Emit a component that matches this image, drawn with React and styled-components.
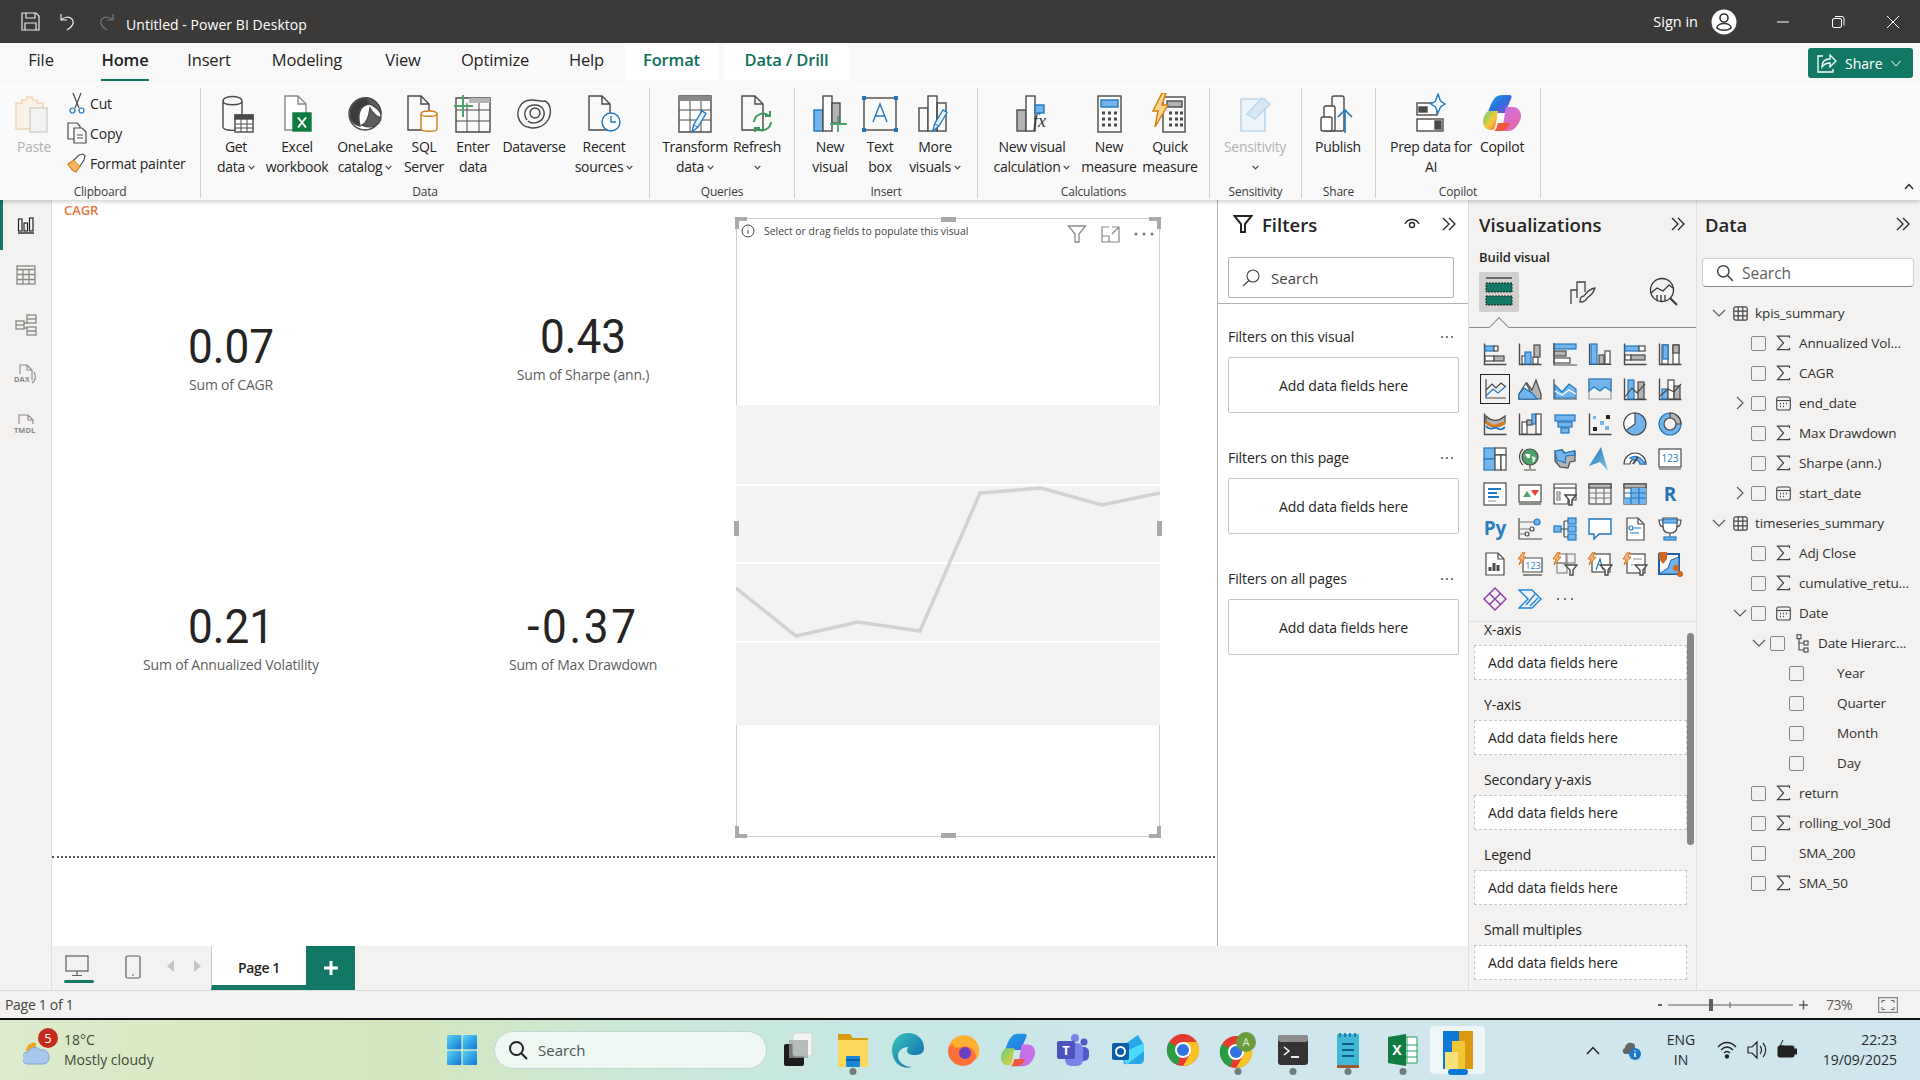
import React from 'react';
import styled, { createGlobalStyle } from 'styled-components';

const GlobalStyle = createGlobalStyle`
  html, body { margin: 0; padding: 0; background: #f3f2f1; }
  body { font-family: "Open Sans", "Noto Sans", sans-serif; color: #252423; font-size: 14px; }
  * { box-sizing: border-box; }
`;

const GREEN = '#117865';
const INK = '#4b4a48';
const BLUE = '#1f78c1';
const SKY = '#74b4ec';
const GREY = '#b4b4b4';

const Page = styled.div`
  width: 1920px;
  height: 1080px;
  overflow: hidden;
  display: flex;
  flex-direction: column;
  position: relative;
`;

/* title bar */
const TitleBar = styled.div`
  height: 43px;
  background: #3b3a38;
  color: #fff;
  display: flex;
  align-items: center;
  padding: 0 0 0 21px;
  flex: none;
`;
const TitleBtn = styled.span`
  width: 38px;
  display: flex;
  align-items: center;
`;
const TitleText = styled.span`
  font-size: 14px;
  margin: 5px 0 0 -9px;
  letter-spacing: 0.05px;
`;
const SignIn = styled.span`
  margin-left: auto;
  font-size: 14.5px;
  margin-right: 13px;
`;
const AvatarWrap = styled.span`
  display: flex;
  margin-right: 18px;
`;
const WinBtn = styled.span`
  width: 55px;
  display: flex;
  justify-content: center;
  align-items: center;
`;

/* tabs */
const TabRow = styled.div`
  height: 38px;
  background: #f9f9f9;
  display: flex;
  flex: none;
  position: relative;
`;
const Tab = styled.div`
  width: ${(p) => p.$w}px;
  margin-right: ${(p) => p.$gap || 0}px;
  display: flex;
  justify-content: center;
  background: ${(p) => (p.$context ? '#fff' : 'transparent')};
  color: ${(p) => (p.$context ? '#0f6f5e' : '#252423')};
  font-size: 16.5px;
  font-weight: ${(p) => (p.$context || p.$active ? 600 : 400)};
  letter-spacing: -0.15px;
`;
const TabLabel = styled.span`
  height: 38px;
  line-height: 34px;
  border-bottom: 2px solid ${(p) => (p.$active ? GREEN : 'transparent')};
`;
const ShareButton = styled.div`
  position: absolute;
  left: 1808px;
  top: 5px;
  width: 105px;
  height: 30px;
  background: ${GREEN};
  border-radius: 3px;
  color: #fff;
  display: flex;
  align-items: center;
  gap: 8px;
  padding-left: 9px;
  font-size: 14px;
`;

/* ribbon */
const Ribbon = styled.div`
  height: 119px;
  background: #f9f9f9;
  display: flex;
  padding-top: 7px;
  flex: none;
  position: relative;
  z-index: 3;
  box-shadow: 0 2px 4px rgba(0, 0, 0, 0.18);
`;
const Group = styled.div`
  width: ${(p) => p.$w}px;
  height: 110px;
  border-right: 1px solid #d2d0ce;
  display: flex;
  flex-direction: column;
  flex: none;
`;
const GroupBody = styled.div`
  display: flex;
  height: 97px;
  padding-left: ${(p) => p.$pad || 0}px;
`;
const GroupLabel = styled.div`
  height: 13px;
  line-height: 13px;
  font-size: 12px;
  letter-spacing: -0.2px;
  text-align: center;
  color: #3b3a39;
`;
const RibItem = styled.div`
  width: ${(p) => p.$w}px;
  display: flex;
  flex-direction: column;
  align-items: center;
  padding-top: 5px;
  flex: none;
  color: ${(p) => (p.$off ? '#b5b3b1' : '#252423')};
`;
const RibIcon = styled.div`
  height: 40px;
  margin-bottom: 4px;
  display: flex;
  align-items: center;
  justify-content: center;
`;
const RibLine = styled.div`
  height: 20px;
  line-height: 20px;
  font-size: 14px;
  letter-spacing: -0.3px;
  white-space: nowrap;
  display: flex;
  align-items: center;
  gap: 3px;
`;
const SmallCol = styled.div`
  display: flex;
  flex-direction: column;
  width: 133px;
`;
const SmallRow = styled.div`
  height: 30px;
  display: flex;
  align-items: center;
  font-size: 14px;
  letter-spacing: -0.15px;
  white-space: nowrap;
`;
const SmallIcon = styled.span`
  width: 22px;
  display: flex;
  justify-content: center;
  margin-left: -2px;
  margin-right: 2px;
`;
const Collapse = styled.div`
  margin-left: auto;
  align-self: flex-end;
  padding: 0 6px 6px 0;
`;

/* body */
const Body = styled.div`
  height: 790px;
  display: flex;
  flex: none;
`;
const Rail = styled.div`
  width: 52px;
  border-right: 1px solid #e1dfdd;
  display: flex;
  flex-direction: column;
  flex: none;
`;
const RailItem = styled.div`
  height: 50px;
  display: flex;
  align-items: center;
  justify-content: center;
  border-left: 3px solid ${(p) => (p.$active ? GREEN : 'transparent')};
  padding-right: 3px;
`;
const Center = styled.div`
  width: 1416px;
  display: flex;
  flex-direction: column;
  flex: none;
`;
const CenterTop = styled.div`
  height: 746px;
  display: flex;
`;
const Canvas = styled.div`
  width: 1165px;
  background: #fff;
  position: relative;
  flex: none;
`;
const CanvasTitle = styled.div`
  position: absolute;
  left: 12px;
  top: 1px;
  font-size: 13px;
  font-weight: 600;
  color: #ea7243;
  letter-spacing: -0.1px;
`;
const Card = styled.div`
  position: absolute;
  left: ${(p) => p.$cx - 150}px;
  top: ${(p) => p.$cy}px;
  width: 300px;
  text-align: center;
`;
const CardValue = styled.div`
  font-family: Roboto, "Noto Sans", sans-serif;
  font-size: 49px;
  font-weight: 400;
  line-height: 56px;
  color: #252423;
  transform: scaleX(0.9);
  letter-spacing: ${(p) => p.$track || 0}px;
`;
const CardLabel = styled.div`
  font-size: 14px;
  line-height: 20px;
  color: #605e5c;
  letter-spacing: -0.2px;
`;
const FoldLine = styled.div`
  position: absolute;
  left: 0;
  right: 2px;
  top: 656px;
  border-top: 2px dotted #555;
`;
const Visual = styled.div`
  position: absolute;
  left: 684px;
  top: 18px;
  width: 424px;
  height: 619px;
  border: 1px solid #cfcfcf;
`;
const VisualHint = styled.div`
  position: absolute;
  left: 4px;
  top: 5px;
  display: flex;
  align-items: center;
  gap: 9px;
  font-size: 10.4px;
  color: #444;
`;
const VisualTools = styled.div`
  position: absolute;
  right: 5px;
  top: 5px;
  display: flex;
  align-items: center;
  gap: 14px;
`;
const Chart = styled.svg`
  position: absolute;
  left: -1px;
  top: 186px;
`;
const Handle = styled.span`
  position: absolute;
  background: #a9a9a9;
  width: ${(p) => (p.$v ? 5 : 15)}px;
  height: ${(p) => (p.$v ? 15 : 5)}px;
  ${(p) => p.$pos}
`;
const Corner = styled.span`
  position: absolute;
  width: 12px;
  height: 12px;
  ${(p) => p.$pos}
  ${(p) => (p.$top ? 'border-top: 4px solid #a9a9a9;' : 'border-bottom: 4px solid #a9a9a9;')}
  ${(p) => (p.$lft ? 'border-left: 4px solid #a9a9a9;' : 'border-right: 4px solid #a9a9a9;')}
`;

/* filters */
const FiltersPane = styled.div`
  width: 251px;
  background: #fff;
  border-left: 1px solid #b3b0ad;
  flex: none;
`;
const PaneHead = styled.div`
  height: 50px;
  display: flex;
  align-items: center;
  padding: 0 ${(p) => p.$right || 10}px 2px ${(p) => p.$left || 10}px;
  font-size: 18.5px;
  font-weight: 600;
  gap: ${(p) => p.$gap || 0}px;
  flex: none;
`;
const PaneEnd = styled.span`
  margin-left: auto;
  display: flex;
  align-items: center;
  gap: 21px;
`;
const SearchWrap = styled.div`
  height: 54px;
  padding: 7px 14px 0 10px;
  border-bottom: 1px solid #b3b0ad;
  margin-bottom: 20px;
`;
const FilterSearch = styled.div`
  height: 41px;
  border: 1px solid #b3b0ad;
  border-radius: 2px;
  display: flex;
  align-items: center;
  gap: 11px;
  padding-left: 13px;
  font-size: 15px;
  color: #484644;
`;
const FilterSection = styled.div`
  padding: 0 9px 0 10px;
  height: 121px;
`;
const FilterHead = styled.div`
  height: 25px;
  display: flex;
  justify-content: space-between;
  align-items: center;
  font-size: 14px;
  letter-spacing: -0.1px;
  padding-right: 5px;
  margin-bottom: 8px;
`;
const FilterWell = styled.div`
  height: 56px;
  border: 1px solid #c8c6c4;
  border-radius: 2px;
  display: flex;
  align-items: center;
  justify-content: center;
  font-size: 14px;
  letter-spacing: -0.1px;
`;

/* page tabs */
const PageBar = styled.div`
  height: 44px;
  display: flex;
  align-items: stretch;
`;
const DeviceBtn = styled.div`
  width: ${(p) => p.$w}px;
  display: flex;
  justify-content: center;
  padding-top: 9px;
  position: relative;
  &::after {
    content: '';
    display: ${(p) => (p.$active ? 'block' : 'none')};
    position: absolute;
    left: 12px;
    width: 30px;
    height: 3px;
    bottom: 7px;
    background: ${GREEN};
    border-radius: 2px;
  }
`;
const Arrows = styled.div`
  width: 45px;
  margin: 0 3px 0 -4px;
  display: flex;
  align-items: center;
  justify-content: space-between;
  padding: 0 4px 4px 7px;
`;
const PageTab = styled.div`
  width: 95px;
  margin-left: 3px;
  background: #fff;
  border-left: 1px solid #c8c6c4;
  border-bottom: 5px solid ${GREEN};
  display: flex;
  align-items: center;
  justify-content: center;
  padding-top: 4px;
  font-size: 14px;
  font-weight: 600;
  letter-spacing: -0.4px;
`;
const AddTab = styled.div`
  width: 49px;
  background: ${GREEN};
  display: flex;
  align-items: center;
  justify-content: center;
`;

/* visualizations pane */
const VizPane = styled.div`
  width: 228px;
  border-left: 1px solid #e1dfdd;
  flex: none;
  position: relative;
  display: flex;
  flex-direction: column;
  overflow: hidden;
`;
const BuildLabel = styled.div`
  height: 15px;
  line-height: 15px;
  padding-left: 10px;
  font-size: 13px;
  font-weight: 600;
  letter-spacing: -0.1px;
  flex: none;
`;
const BuildTabs = styled.div`
  height: 40px;
  margin: 7px 0 0 10px;
  display: flex;
  align-items: center;
  flex: none;
`;
const BuildTab = styled.div`
  width: 40px;
  height: 40px;
  border-radius: 2px;
  margin-right: ${(p) => p.$gap}px;
  background: ${(p) => (p.$on ? '#d2d0ce' : 'transparent')};
  display: flex;
  align-items: center;
  justify-content: center;
`;
const BuildRule = styled.div`
  height: 1px;
  margin-top: 15px;
  background: #8f8d8b;
  position: relative;
  flex: none;
  &::after {
    content: '';
    position: absolute;
    left: 23px;
    top: -7px;
    width: 13px;
    height: 13px;
    background: #f3f2f1;
    border-left: 1px solid #8f8d8b;
    border-top: 1px solid #8f8d8b;
    transform: rotate(45deg);
  }
`;
const VizGrid = styled.div`
  display: grid;
  grid-template-columns: repeat(6, 35px);
  grid-auto-rows: 35px;
  padding: 8px 0 0 8px;
  height: 294px;
  border-bottom: 1px solid #e1dfdd;
  flex: none;
`;
const VizCell = styled.div`
  display: flex;
  align-items: center;
  justify-content: center;
`;
const WellSection = styled.div`
  height: 75px;
  padding: 0 9px 0 5px;
  flex: none;
`;
const WellLabel = styled.div`
  height: 15px;
  line-height: 15px;
  padding-left: 10px;
  font-size: 14px;
  letter-spacing: -0.1px;
`;
const Well = styled.div`
  height: 35px;
  margin-top: 8px;
  background: #fff;
  border: 1px dashed #c8c6c4;
  display: flex;
  align-items: center;
  padding-left: 13px;
  font-size: 14px;
  letter-spacing: -0.05px;
`;
const Scroll = styled.div`
  position: absolute;
  left: 218px;
  top: 433px;
  width: 7px;
  height: 212px;
  border-radius: 4px;
  background: #8a8886;
`;

/* data pane */
const DataPane = styled.div`
  width: 224px;
  border-left: 1px solid #e1dfdd;
  flex: none;
`;
const DataSearch = styled.div`
  height: 29px;
  margin: 8px 6px 11px 5px;
  background: #fff;
  border: 1px solid #d2d0ce;
  border-bottom-color: #8a8886;
  border-radius: 4px;
  display: flex;
  align-items: center;
  gap: 8px;
  padding-left: 13px;
  font-size: 15.5px;
  color: #605e5c;
`;
const Tree = styled.div`
  display: flex;
  flex-direction: column;
`;
const TreeRow = styled.div`
  height: 30px;
  display: flex;
  align-items: center;
  padding-left: ${(p) => p.$pad}px;
  font-size: 13.5px;
  letter-spacing: -0.1px;
  white-space: nowrap;
  color: #323130;
`;
const Slot = styled.span`
  width: ${(p) => p.$w}px;
  margin-right: ${(p) => p.$m || 0}px;
  display: flex;
  justify-content: center;
  align-items: center;
  flex: none;
`;
const Check = styled.span`
  width: 15px;
  height: 15px;
  border: 1px solid #8a8886;
  border-radius: 2px;
  margin-right: 10px;
  flex: none;
`;

/* status bar */
const StatusBar = styled.div`
  height: 30px;
  border-top: 1px solid #dedcda;
  border-bottom: 2px solid #111;
  display: flex;
  align-items: center;
  padding-left: 5px;
  font-size: 14px;
  letter-spacing: -0.3px;
  color: #484644;
  flex: none;
`;
const Zoomer = styled.div`
  margin-left: auto;
  display: flex;
  align-items: center;
  color: #605e5c;
  padding-right: 22px;
`;
const ZoomPct = styled.span`
  font-size: 14px;
  margin: 0 26px 0 18px;
  letter-spacing: -0.5px;
`;

/* taskbar */
const Taskbar = styled.div`
  height: 60px;
  background: linear-gradient(90deg, #dcebcc 0%, #d4e7bb 20%, #cbe8d8 33%, #c6e7e3 45%, #cfe6ec 62%, #cfe6ee 100%);
  display: flex;
  align-items: center;
  flex: none;
  color: #2a2a2a;
`;
const Weather = styled.div`
  width: 434px;
  display: flex;
  align-items: center;
  padding-left: 23px;
  gap: 7px;
  position: relative;
`;
const WeatherBadge = styled.span`
  position: absolute;
  left: 38px;
  top: -2px;
  width: 20px;
  height: 20px;
  border-radius: 50%;
  background: #c42b1c;
  color: #fff;
  font-size: 13px;
  text-align: center;
  line-height: 20px;
`;
const WeatherText = styled.div`
  font-size: 14px;
  line-height: 20px;
  color: #3d4a38;
`;
const TaskSlot = styled.div`
  width: 55px;
  height: 48px;
  display: flex;
  align-items: center;
  justify-content: center;
  position: relative;
  border-radius: 4px;
  background: ${(p) => (p.$active ? 'rgba(255,255,255,0.65)' : 'transparent')};
  &::after {
    content: '';
    display: ${(p) => (p.$run || p.$active ? 'block' : 'none')};
    position: absolute;
    bottom: -1px;
    left: 50%;
    transform: translateX(-50%);
    width: ${(p) => (p.$active ? 20 : 7)}px;
    height: ${(p) => (p.$active ? 6 : 7)}px;
    border-radius: 4px;
    background: ${(p) => (p.$active ? '#0a78d4' : '#6f7d7c')};
  }
`;
const SearchPill = styled.div`
  width: 273px;
  height: 38px;
  margin: 0 3px 0 5px;
  border-radius: 19px;
  background: #eef7f2;
  border: 1px solid #c0d8d2;
  display: flex;
  align-items: center;
  gap: 10px;
  padding-left: 13px;
  font-size: 15px;
  color: #4c5552;
`;
const Tray = styled.div`
  margin-left: auto;
  width: 340px;
  padding-right: 23px;
  display: flex;
  align-items: center;
`;
const TraySlot = styled.span`
  width: ${(p) => p.$w}px;
  margin-right: ${(p) => p.$m || 0}px;
  display: flex;
  justify-content: center;
  flex: none;
`;
const TrayText = styled.div`
  font-size: 14px;
  line-height: 20px;
  text-align: ${(p) => p.$align || 'center'};
  margin-left: ${(p) => (p.$push ? 'auto' : 0)};
  white-space: nowrap;
  width: ${(p) => (p.$w ? `${p.$w}px` : 'auto')};
`;

/* drawing helpers */
const Svg = ({ s = 24, vb, children }) => (
  <svg width={s} height={s} viewBox={vb || `0 0 ${s} ${s}`} fill="none" stroke={INK} strokeWidth="1.3">{children}</svg>
);
const V = ({ children }) => <svg width="24" height="24" viewBox="0 0 24 24" fill="none" stroke={INK} strokeWidth="1.2">{children}</svg>;
const Ax = () => <path d="M1.5 1.5v21h22" strokeWidth="1.4" />;
const Bl = (p) => <rect stroke={BLUE} fill={SKY} {...p} />;
const Gr = (p) => <rect stroke={INK} fill={GREY} {...p} />;
const Wt = (p) => <rect stroke={INK} fill="#fff" {...p} />;

const Chev2 = ({ c = '#252423' }) => <Svg s={16}><path d="M2 2l6 6-6 6M8 2l6 6-6 6" stroke={c} strokeWidth="1.3" /></Svg>;
const Caret = () => <svg width="7" height="5" viewBox="0 0 7 5" fill="none" stroke="#444" strokeWidth="1.2"><path d="M.7.8 3.5 3.8 6.3.8" /></svg>;
const Down = () => <svg width="14" height="14" viewBox="0 0 14 14" fill="none" stroke="#555" strokeWidth="1.1"><path d="M1 4l6 6 6-6" /></svg>;
const Right = () => <svg width="10" height="14" viewBox="0 0 10 14" fill="none" stroke="#555" strokeWidth="1.1"><path d="M2 1l6 6-6 6" /></svg>;
const Sigma = () => <svg width="15" height="16" viewBox="0 0 15 16" fill="none" stroke="#444" strokeWidth="1.2"><path d="M13.5 3V1.2H1.5L7.5 8l-6 6.6h12V13" /></svg>;
const Cal = () => <svg width="15" height="15" viewBox="0 0 15 15" fill="none" stroke="#444" strokeWidth="1.1"><rect x=".7" y="1" width="13.6" height="13" rx="2" /><path d="M1 4.5h13" /><path d="M4 7.5h1M7 7.5h1M10 7.5h1M4 10.5h1M7 10.5h1" strokeWidth="1.3" /></svg>;
const TableIc = () => <svg width="15" height="15" viewBox="0 0 15 15" fill="none" stroke="#444" strokeWidth="1.2"><rect x=".8" y=".8" width="13.4" height="13.4" rx="2" /><path d="M5.2 1v13M9.8 1v13M1 5.2h13M1 9.8h13" /></svg>;
const Hier = () => <svg width="13" height="19" viewBox="0 0 13 19" fill="none" stroke="#444" strokeWidth="1.1"><rect x="1" y=".7" width="4" height="4" /><rect x="8" y="7" width="4" height="4" /><rect x="8" y="14" width="4" height="4" /><path d="M3 5v11h5M3 9h5" /></svg>;
const Lens = ({ s = 16 }) => <Svg s={s} vb="0 0 16 16"><circle cx="6.5" cy="6.5" r="5" stroke="#444" /><path d="M10.3 10.3 15 15" stroke="#444" /></Svg>;
const Funnel = ({ s = 20, w = 1.3, c = '#252423' }) => <svg width={s} height={s} viewBox="0 0 20 20" fill="none" stroke={c} strokeWidth={w}><path d="M1.5 2h17l-6.5 8v8H8v-8z" /></svg>;
const Bolt = ({ x = 0, y = 0 }) => <path transform={`translate(${x} ${y})`} d="M5 0 0 7h3L1 13 8 5H5l2-5z" fill="#f4b183" stroke="#d67a12" strokeWidth="1" />;
const Pencil = ({ x = 0, y = 0 }) => <g transform={`translate(${x} ${y})`}><path d="M0 22l1.5-7L10 1l4 2.5L6 17z" fill="#e8f2fb" stroke={BLUE} strokeWidth="1.3" /><path d="M1.5 15 6 17" stroke={BLUE} strokeWidth="1" /></g>;

/* ribbon icons, drawn on a 40x40 grid */
const R = ({ children }) => <svg width="40" height="40" viewBox="0 0 40 40" fill="none" stroke={INK} strokeWidth="1.4">{children}</svg>;
const Doc = ({ x = 0, c = INK }) => <path transform={`translate(${x} 0)`} d="M4 3h13l8 8v26H4z M17 3v8h8" stroke={c} fill="#fff" />;
const ribIcons = {
  paste: <R><path d="M2 10h6v-3h4l1-3h5l1 3h4v3h6v26H2z" stroke="#f3ddc3" fill="#fbf3e8" strokeWidth="2" /><rect x="16" y="15" width="17" height="24" fill="#f4f3f2" stroke="#d2d0ce" /></R>,
  getdata: <R><path d="M7 8c0-6 19-6 19 0v26c0 3-9 4-14 3-3-.5-5-1.5-5-3zM7 8c0 5 19 5 19 0" /><rect x="19" y="22" width="18" height="17" fill="#fff" /><rect x="19" y="22" width="18" height="4" fill={INK} /><path d="M25 26v13M31 26v13M19 31h18M19 35h18" strokeWidth="1" /></R>,
  excel: <R><Doc x={4} c="#8a8886" /><rect x="16" y="20" width="18" height="18" fill="#107c41" stroke="#107c41" /><path d="M21 24.5l8 10M29 24.5l-8 10" stroke="#fff" strokeWidth="2" /></R>,
  onelake: <R><circle cx="20" cy="21" r="16" fill="#fff" /><path d="M5 22c0-10 7-17 16-17 2-1 5 3 4 6-7 1-14 5-10 22-4-1-10-4-10-11z" fill="#3d3c3a" /><path d="M21 5c9 0 15 8 15 16-2-5-7-8-11-10zM17 32c5-2 7-9 8-17 3 6 8 9 11 10-1 6-8 12-19 7z" fill="#605e5c" /></R>,
  sql: <R><path d="M4 3h13l8 8v26H4zM17 3v8h8" /><path d="M17 21c0-4 16-4 16 0v15c0 3-16 3-16 0z" fill="#fff" stroke="#d67a12" /><path d="M17 21c0 3 16 3 16 0" stroke="#d67a12" /></R>,
  enter: <R><path d="M3 5h34v34H3z" /><rect x="16" y="5" width="21" height="5" fill={GREY} stroke="none" /><path d="M3 17h34M3 28h34M14 10v29M26 10v29" strokeWidth="1" /><path d="M1 13h19M10 2v22" stroke="#4ca46b" strokeWidth="2" /></R>,
  dataverse: <R><path d="M8 31c-8-9-4-24 10-24 6 0 9 2 13 1 6 3 7 12 3 19-5 8-15 9-20 7-3 0-4-1-6-3z" /><path d="M13 27c-5-7-1-15 8-15 8 0 11 7 8 13-4 6-12 6-15 3" /><circle cx="21" cy="20" r="5" /></R>,
  recent: <R><path d="M5 3h13l8 8v26H5zM18 3v8h8" /><circle cx="27" cy="29" r="9" fill="#fff" stroke={BLUE} /><path d="M27 23v6h5" stroke={BLUE} /></R>,
  transform: <R><path d="M4 3h32v36H4z" fill="#fff" /><rect x="4" y="3" width="32" height="5" fill="#8a8886" stroke="none" /><path d="M4 17h32M4 27h32M15 8v31M26 8v31" strokeWidth="1" /><Pencil x={17} y={17} /></R>,
  refresh: <R><path d="M5 3h13l8 8v26H5zM18 3v8h8" /><g stroke="#3a9a5e" strokeWidth="2"><path d="M17 29a9 9 0 0 1 15-6" /><path d="M33 18v5h-5" /><path d="M34 29a9 9 0 0 1-15 6" /><path d="M18 39v-4h5" /></g></R>,
  newvis: <R><rect x="4" y="17" width="9" height="21" fill={SKY} stroke={BLUE} /><rect x="13" y="3" width="9" height="35" fill="#fff" /><rect x="22" y="10" width="8" height="20" fill={GREY} /><path d="M20 31h17M28 23v16" stroke="#4ca46b" strokeWidth="1.8" /></R>,
  textbox: <R><rect x="4" y="5" width="32" height="32" /><g fill={BLUE} stroke="none"><rect x="2" y="3" width="4" height="4" /><rect x="34" y="3" width="4" height="4" /><rect x="2" y="35" width="4" height="4" /><rect x="34" y="35" width="4" height="4" /></g><path d="M13 29l7-18 7 18M15 23h10" stroke={BLUE} /></R>,
  more: <R><rect x="4" y="15" width="9" height="23" /><rect x="13" y="3" width="9" height="35" fill="#fff" /><rect x="22" y="10" width="9" height="28" /><Pencil x={18} y={16} /></R>,
  calc: <R><rect x="5" y="17" width="9" height="21" fill={GREY} /><rect x="14" y="3" width="9" height="35" fill="#fff" /><rect x="23" y="12" width="9" height="8" fill={SKY} stroke={BLUE} /><text x="21" y="34" fontFamily="Liberation Serif, serif" fontStyle="italic" fontSize="18" fill="#333" stroke="none">fx</text></R>,
  measure: <R><rect x="9" y="3" width="23" height="36" /><rect x="12" y="7" width="17" height="7" fill={SKY} stroke={BLUE} /><path d="M13 20h3M19 20h3M25 20h3M13 26h3M19 26h3M25 26h3M13 32h3M19 32h3M25 32h3" strokeWidth="3" /></R>,
  quick: <R><rect x="13" y="4" width="22" height="35" /><rect x="17" y="8" width="15" height="6" fill={GREY} /><path d="M19 20h3M25 20h3M30 20h3M19 26h3M25 26h3M30 26h3M19 32h3M25 32h3M30 32h3" strokeWidth="3" /><path d="M12 0 3 18h5L5 34 18 12h-6l4-12z" fill="#fbd58a" stroke="#d67a12" /></R>,
  sensitivity: <R><path d="M6 6h24v32H6z" stroke="#bcd8ec" fill="#eef5fa" strokeWidth="1.6" /><path d="M12 21 27 5l8 6-15 15z" fill="#d7e8f4" stroke="#bcd8ec" /></R>,
  publish: <R><rect x="14" y="3" width="12" height="35" rx="2" /><rect x="6" y="13" width="11" height="25" rx="2" fill="#fff" /><rect x="3" y="24" width="11" height="14" rx="2" fill="#fff" /><path d="M27 40V17M20 24l7-7 7 7" stroke="#1f78c1" strokeWidth="1.6" /></R>,
  prep: <R><rect x="6" y="10" width="20" height="12" fill="#fff" /><rect x="8" y="14" width="8" height="5" fill={INK} /><rect x="6" y="26" width="26" height="12" fill="#fff" /><rect x="24" y="28" width="6" height="8" fill={INK} /><path d="M27 1l2.5 7 4.5 3-4.5 3-2.5 6-2.5-6-4.5-3 4.5-3z" stroke="#1f78c1" fill="#fff" /></R>,
  copilot: <svg width="40" height="40" viewBox="0 0 40 40"><defs><linearGradient id="cpa" x1="0" y1="0" x2="1" y2="1"><stop offset="0" stopColor="#1ea4e8" /><stop offset=".5" stopColor="#2c6fe0" /><stop offset="1" stopColor="#8c4fd8" /></linearGradient><linearGradient id="cpb" x1="0" y1="0" x2="1" y2="1"><stop offset="0" stopColor="#5ed27a" /><stop offset=".55" stopColor="#f2c93a" /><stop offset="1" stopColor="#f26a3c" /></linearGradient><linearGradient id="cpc" x1="0" y1="0" x2="1" y2="1"><stop offset="0" stopColor="#c86fe8" /><stop offset="1" stopColor="#e86aa6" /></linearGradient></defs><path d="M12 6c2-3 5-4 8-4h7c3 0 3 2 2 4l-6 14H6c1-5 3-10 6-14z" fill="url(#cpa)" /><path d="M6 18h10l-2 12c-1 5-1 7-5 7-5 0-8-4-8-9 0-4 3-8 5-10z" fill="url(#cpb)" /><path d="M24 14h7c5 0 8 4 8 9 0 4-3 9-6 12-2 2-4 3-7 3h-9c3-1 3-3 4-6z" fill="url(#cpc)" /><path d="M16 30h12c-2 5-5 8-10 8h-6c2-1 3-4 4-8z" fill="#f0563a" /></svg>,
};

/* small ribbon icons */
const CutIc = () => <svg width="18" height="22" viewBox="0 0 18 22" fill="none" stroke={INK} strokeWidth="1.2"><path d="M5 1l6 15M13 1 7 16" /><circle cx="4.5" cy="18.5" r="2.5" stroke={BLUE} /><circle cx="13.5" cy="18.5" r="2.5" stroke={BLUE} /></svg>;
const CopyIc = () => <svg width="21" height="22" viewBox="0 0 21 22" fill="none" stroke={INK} strokeWidth="1.2"><path d="M1 1h9l3 3v13H1z" /><path d="M7 6h8l4 4v11H7z" fill="#f9f9f9" /><path d="M10 13h6M10 16h6" /></svg>;
const PainterIc = () => <svg width="20" height="20" viewBox="0 0 20 20" fill="none" stroke={INK} strokeWidth="1.1"><path d="M1 11l6-4 6 6-4 6c-3-1-6-4-8-8z" fill="#f7b567" stroke="#d67a12" /><path d="M7 7l5-5 4-1 2 2-1 4-4 6" fill="#fff" /></svg>;

/* titlebar icons */
const SaveIc = () => <svg width="19" height="19" viewBox="0 0 19 19" fill="none" stroke="#e8e8e8" strokeWidth="1.2"><path d="M1 1h14l3 3v14H1z" /><path d="M5 1v5h9V1M4 18v-7h11v7" /></svg>;
const UndoIc = ({ c = '#e8e8e8' }) => <svg width="18" height="18" viewBox="0 0 18 18" fill="none" stroke={c} strokeWidth="1.2"><path d="M2 1v6h6M2 7c3-3 8-4 11-1 3 4 0 8-5 11" /></svg>;
const RedoIc = () => <svg width="18" height="18" viewBox="0 0 18 18" fill="none" stroke="#777" strokeWidth="1.2"><path d="M16 1v6h-6M16 7c-3-3-8-4-11-1-3 4 0 8 5 11" /></svg>;
const Avatar = () => <svg width="26" height="26" viewBox="0 0 26 26"><circle cx="13" cy="13" r="12.5" fill="#fff" /><circle cx="13" cy="9" r="4" fill="none" stroke="#333" strokeWidth="1.6" /><path d="M6 19c0-6 14-6 14 0-3 3-11 3-14 0z" fill="none" stroke="#333" strokeWidth="1.6" /></svg>;
const ShareIc = () => <svg width="20" height="20" viewBox="0 0 20 20" fill="none" stroke="#fff" strokeWidth="1.3"><path d="M6 3H1v16h15v-3" /><path d="M5 14c0-6 4-8 8-8V2l6 6-6 6v-4c-4 0-6 1-8 4z" /></svg>;

/* visual picker icons */
const vizIcons = [
  <V><Ax /><Bl x="2" y="4" width="9" height="5" /><Wt x="11" y="4" width="4" height="5" /><Wt x="2" y="14" width="9" height="5" /><Gr x="11" y="14" width="10" height="5" /></V>,
  <V><Ax /><Wt x="4" y="14" width="5" height="8" /><Wt x="15" y="15" width="5" height="7" /><Bl x="7" y="10" width="6" height="12" /><Gr x="16" y="3" width="6" height="12" /></V>,
  <V><Bl x="1" y="2" width="22" height="5" /><Gr x="1" y="9" width="12" height="5" /><Wt x="1" y="16" width="16" height="5" /><path d="M1 1v22h23" /></V>,
  <V><path d="M1.5 1.5v21h22" /><Bl x="3" y="2" width="6" height="20" /><Gr x="11" y="13" width="5" height="9" /><Wt x="17" y="9" width="5" height="13" /></V>,
  <V><Ax /><Bl x="2" y="4" width="14" height="5" /><Wt x="16" y="4" width="6" height="5" /><Wt x="2" y="13" width="6" height="5" /><Gr x="8" y="13" width="14" height="5" /></V>,
  <V><Ax /><Wt x="4" y="3" width="6" height="19" /><Bl x="5" y="3" width="5" height="14" /><Wt x="15" y="3" width="6" height="19" /><Gr x="15" y="3" width="6" height="8" /></V>,
  <svg width="30" height="30" viewBox="-3 -3 30 30" fill="none" stroke={INK} strokeWidth="1.2"><rect x="-2.5" y="-2.5" width="29" height="29" stroke="#252423" strokeWidth="1" /><path d="M3 2v19h20" /><path d="M3 13l6-6 4 4 5-5 5 4" stroke="#444" /><path d="M3 19l7-7 5 4 8-7" stroke={BLUE} /></svg>,
  <V><path d="M1 20 9 6l5 7 4-10 5 14v5H1z" fill={GREY} /><path d="M1 22v-5l7-11 8 16z" fill="#fff" /><path d="M1 22V17l5-6 8 5 5 6z" fill={SKY} stroke={BLUE} /></V>,
  <V><path d="M1 2v20h23" /><path d="M2 8l7 7 7-8 7 5v9H2z" fill={SKY} stroke={BLUE} /><path d="M2 14l7 4 7-5 7 4" stroke="#fff" /></V>,
  <V><path d="M1 2h22v20H1z" stroke="#999" /><path d="M1 2h22v12l-6-4-5 4-6-4-5 4z" fill={SKY} stroke={BLUE} /></V>,
  <V><Ax /><Bl x="5" y="3" width="6" height="19" /><Gr x="15" y="5" width="6" height="17" /><path d="M2 20l7-9 5 5 8-9" /></V>,
  <V><Ax /><Bl x="4" y="12" width="6" height="10" /><Wt x="10" y="3" width="6" height="19" /><Gr x="16" y="9" width="6" height="13" /><path d="M2 19l8-7 6 3 7-8" /></V>,
  <V><Ax /><path d="M3 4c6 6 12 6 19 0v7c-6 5-13 5-19 0z" fill={GREY} /><path d="M3 10c6 4 6 5 10 4 4-1 5-2 9-3" stroke="#d67a12" strokeWidth="3" /><path d="M3 14c5 6 8 0 11 2s5 2 8-1" stroke={BLUE} strokeWidth="2" /></V>,
  <V><Ax /><Wt x="4" y="10" width="5" height="12" /><Gr x="9" y="8" width="5" height="5" /><Bl x="14" y="2" width="4" height="10" /><Wt x="18" y="2" width="5" height="20" /></V>,
  <V><Bl x="2" y="3" width="20" height="6" /><Bl x="5" y="10" width="14" height="5" /><Bl x="8" y="16" width="8" height="5" /></V>,
  <V><Ax /><g stroke="none"><rect x="5" y="4" width="3" height="3" fill={SKY} /><rect x="12" y="9" width="4" height="4" fill={SKY} /><rect x="18" y="3" width="4" height="4" fill="#252423" /><rect x="5" y="15" width="4" height="4" fill="#252423" /><rect x="17" y="14" width="4" height="4" fill={SKY} /></g></V>,
  <V><circle cx="12" cy="12" r="11" fill={SKY} stroke={INK} /><path d="M12 12V1A11 11 0 0 0 3 18.5z" fill="#fff" stroke={INK} /></V>,
  <V><circle cx="12" cy="12" r="11" fill={SKY} stroke={BLUE} /><path d="M12 1a11 11 0 0 1 11 11H17a5 5 0 0 0-5-5z" fill={GREY} stroke={INK} /><circle cx="12" cy="12" r="6" fill="#f3f2f1" stroke={INK} /></V>,
  <V><Bl x="1" y="1" width="11" height="11" /><Bl x="1" y="12" width="11" height="11" /><Wt x="12" y="1" width="11" height="7" /><Wt x="12" y="8" width="6" height="15" /><Wt x="18" y="8" width="5" height="15" /></V>,
  <V><circle cx="12" cy="10" r="8" fill="#4ca46b" stroke={INK} /><path d="M7 7h5v4H9zM14 9l4 2-3 5z" fill="#fff" stroke="none" /><path d="M5 2a11 11 0 0 0 0 16M12 18v4M6 23h12" /></V>,
  <V><path d="M2 4l7-1 3 3 10-2v10l-5 1-2 6-8-1-5-6z" fill={GREY} /><path d="M2 4l7-1 2 3 10-2 1 4-9 1-1 7-4-2H4z" fill={SKY} stroke={BLUE} /></V>,
  <svg width="24" height="26" viewBox="0 0 24 26"><defs><linearGradient id="azm" x1="0" y1="0" x2="1" y2="1"><stop offset="0" stopColor="#1c6fb5" /><stop offset="1" stopColor="#7ec8ec" /></linearGradient></defs><path d="M13 1 1 20l11-4 8 9z" fill="url(#azm)" /></svg>,
  <V><path d="M1 17a11 11 0 0 1 22 0h-6a5 5 0 0 0-10 0z" fill="#fff" /><path d="M7 11a9 9 0 0 1 10 0l6 6h-6a5 5 0 0 0-6-4z" fill={SKY} stroke={BLUE} /><path d="M10 17l5-7" strokeWidth="2" /></V>,
  <svg width="24" height="24" viewBox="0 0 24 24" fill="none" stroke={INK}><rect x="1" y="2" width="22" height="18" fill="#fff" strokeWidth="1.2" /><path d="M1 22h22" /><text x="12" y="15" textAnchor="middle" fontSize="10" fontFamily="Open Sans, sans-serif" fill={BLUE} stroke="none">123</text></svg>,
  <V><rect x="1" y="1" width="22" height="22" fill="#fff" /><path d="M5 7h13M5 11h9M5 15h11" stroke={BLUE} strokeWidth="2" /><path d="M5 19h8" stroke={GREY} strokeWidth="1.5" /></V>,
  <V><rect x="1" y="3" width="22" height="17" fill="#fff" /><path d="M5 15l4-6 4 6z" fill="#4ca46b" stroke="none" /><path d="M13 8h8l-4 6z" fill="#e0413a" stroke="none" /><path d="M1 22h22" /></V>,
  <V><path d="M1 2h22v16h-8v4H1z" fill="#fff" /><path d="M1 6h22" /><path d="M4 10h3v3H4zM4 15h3v3H4z" stroke="#777" /><path d="M12 13h11l-4 5v5h-3v-5z" fill="#fff" strokeWidth="1.5" /></V>,
  <V><rect x="1" y="2" width="22" height="20" /><rect x="1" y="2" width="22" height="4" fill={GREY} /><path d="M8 6v16M16 6v16M1 11h22M1 16h22" stroke="#777" /></V>,
  <V><rect x="1" y="2" width="22" height="20" /><rect x="1" y="2" width="22" height="4" fill={GREY} /><rect x="8" y="6" width="15" height="16" fill={SKY} stroke="none" /><rect x="1" y="16" width="22" height="6" fill={SKY} stroke="none" /><path d="M8 6v16M16 6v16M1 11h22M1 16h22" stroke={BLUE} /></V>,
  <svg width="26" height="28" viewBox="0 0 26 28"><text x="13" y="21" textAnchor="middle" fontSize="19" fontWeight="700" fontFamily="Open Sans, sans-serif" fill="#2273b8">R</text></svg>,
  <svg width="30" height="30" viewBox="0 0 30 30"><text x="15" y="21" textAnchor="middle" fontSize="19" fontWeight="700" fontFamily="Open Sans, sans-serif" fill="#2a7fc1">Py</text></svg>,
  <V><path d="M1 1v21h23" /><path d="M1 5h15M1 12h11M1 17h7" stroke="#777" /><circle cx="19" cy="5" r="3" fill={SKY} stroke={BLUE} /><circle cx="14" cy="12" r="2" /><circle cx="9" cy="17" r="2" /></V>,
  <V><Bl x="1" y="9" width="7" height="6" /><Bl x="15" y="1" width="8" height="6" /><Bl x="15" y="9" width="8" height="6" /><Bl x="15" y="17" width="8" height="6" /><path d="M8 12h7M11 4v16M11 4h4M11 20h4" /></V>,
  <svg width="24" height="24" viewBox="0 0 24 24" fill="#fff" stroke="#2273b8" strokeWidth="1.4"><path d="M1 2h22v15H11l-5 5v-5H1z" /></svg>,
  <V><path d="M4 1h11l6 6v16H4z" fill="#fff" /><path d="M15 1v6h6" /><circle cx="8" cy="11" r="2" stroke={BLUE} /><path d="M11 11h7M7 16h9" stroke={BLUE} /></V>,
  <V><path d="M5 1h14v9c0 4-3 6-7 6s-7-2-7-6z" fill="#fff" /><path d="M5 2h14v4H5z" fill={SKY} stroke={BLUE} /><path d="M5 3H1c0 5 2 7 5 7M19 3h4c0 5-2 7-5 7M12 16v4" /><rect x="6" y="20" width="12" height="3" fill={SKY} stroke={BLUE} /></V>,
  <V><path d="M3 1h12l6 6v16H3z" fill="#fff" /><path d="M15 1v6h6" /><path d="M7 19v-4M11 19v-8M15 19v-6" strokeWidth="3" /></V>,
  <svg width="26" height="24" viewBox="0 0 26 24" fill="none" stroke={INK} strokeWidth="1.2"><path d="M6 6h19v14H6z" fill="#fff" /><path d="M6 23h19" /><text x="16" y="17" textAnchor="middle" fontSize="9" fontFamily="Open Sans, sans-serif" fill={BLUE} stroke="none">123</text><Bolt x={1} y={0} /></svg>,
  <svg width="26" height="24" viewBox="0 0 26 24" fill="none" stroke="#888" strokeWidth="1.2"><rect x="5" y="2" width="10" height="9" fill="#fff" /><rect x="14" y="2" width="9" height="9" /><rect x="5" y="11" width="10" height="10" /><path d="M13 13h12l-4 5v5h-3v-5z" fill="#fff" stroke={INK} strokeWidth="1.4" /><Bolt x={1} y={0} /></svg>,
  <svg width="26" height="24" viewBox="0 0 26 24" fill="none" stroke={INK} strokeWidth="1.2"><rect x="5" y="2" width="18" height="18" fill="#fff" /><path d="M9 18l4-11 3 11" stroke={BLUE} /><path d="M13 13h12l-4 5v5h-3v-5z" fill="#fff" strokeWidth="1.4" /><Bolt x={1} y={0} /></svg>,
  <svg width="26" height="24" viewBox="0 0 26 24" fill="none" stroke={INK} strokeWidth="1.2"><rect x="5" y="2" width="18" height="19" fill="#fff" /><path d="M11 7h9M9 13h2" stroke="#888" /><path d="M13 13h12l-4 5v5h-3v-5z" fill="#fff" strokeWidth="1.4" /><Bolt x={1} y={0} /></svg>,
  <svg width="26" height="26" viewBox="0 0 26 26" fill="none"><path d="M2 3h20v20H2z" fill="#fff" stroke="#1f5fa8" strokeWidth="2" /><path d="M2 23l9-6 3-8 8-3v17z" fill={SKY} stroke="#1f5fa8" /><path d="M2 1h8v7l-4 5-4-5z" fill="#d0671c" /><circle cx="19" cy="17" r="3" fill="#d0671c" /><circle cx="23" cy="23" r="3" fill="#d0671c" /></svg>,
  <svg width="24" height="24" viewBox="0 0 24 24" fill="none" stroke="#8a3ba5" strokeWidth="1.4"><path d="M12 1l5.5 5.5L12 12 6.5 6.5zM12 12l5.5 5.5L12 23l-5.5-5.5zM6.5 6.5 12 12l-5.5 5.5L1 12zM17.5 6.5 23 12l-5.5 5.5L12 12z" /></svg>,
  <svg width="24" height="20" viewBox="0 0 24 20" fill="none" stroke="#1d86e0" strokeWidth="1.4"><path d="M1 1h13l9 9-9 9H1l9-9z" /><path d="M8 16 17 5M12 17l8-8" /></svg>,
  <svg width="24" height="6" viewBox="0 0 24 6" fill={INK}><circle cx="5" cy="3" r="1" /><circle cx="12" cy="3" r="1" /><circle cx="19" cy="3" r="1" /></svg>,
];

/* taskbar icons */
const taskIcons = [
  <svg width="30" height="36" viewBox="0 0 30 36"><rect x="1" y="12" width="20" height="22" rx="2" fill="#1d1d1d" /><rect x="10" y="1" width="19" height="23" rx="2" fill="#f2f5f4" stroke="#cfd6d4" /><rect x="6" y="8" width="19" height="18" fill="#9ca3a2" opacity=".7" /></svg>,
  <svg width="32" height="36" viewBox="0 0 32 36"><path d="M1 2h12l3 4h15v4H1z" fill="#d89b14" /><path d="M1 8h30v27H1z" fill="#fbd75b" /><rect x="9" y="24" width="14" height="11" rx="1" fill="#1a86d8" /><path d="M9 28h14" stroke="#0a5ea8" strokeWidth="2" /></svg>,
  <svg width="34" height="36" viewBox="0 0 34 36"><defs><linearGradient id="edg" x1="0" y1="0" x2="1" y2="1"><stop offset="0" stopColor="#38c6b4" /><stop offset="1" stopColor="#0f62b4" /></linearGradient></defs><path d="M17 1c9 0 16 6 16 15 0 6-5 7-9 7-6 0-8-2-8-5 0-2 2-3 2-3-6 0-11 3-11 9 0 6 6 11 14 11C10 38 1 30 1 18 1 8 8 1 17 1z" fill="url(#edg)" /></svg>,
  <svg width="34" height="34" viewBox="0 0 34 34"><circle cx="17" cy="18" r="15" fill="#ff7139" /><circle cx="19" cy="20" r="6" fill="#6b3fc4" /><path d="M3 14C6 3 20-2 29 7c6 6 5 15 1 20 1-9-6-16-15-13-5 2-8 0-8-3-2 1-3 2-4 3z" fill="#fdb02f" /></svg>,
  <svg width="36" height="36" viewBox="0 0 40 40"><defs><linearGradient id="cqa" x1="0" y1="0" x2="1" y2="1"><stop offset="0" stopColor="#1ea4e8" /><stop offset="1" stopColor="#2c6fe0" /></linearGradient><linearGradient id="cqb" x1="0" y1="0" x2="1" y2="1"><stop offset="0" stopColor="#5ed27a" /><stop offset="1" stopColor="#f2c93a" /></linearGradient></defs><path d="M12 6c2-3 5-4 8-4h7c3 0 3 2 2 4l-6 14H6c1-5 3-10 6-14z" fill="url(#cqa)" /><path d="M6 18h10l-2 12c-1 5-1 7-5 7-5 0-8-4-8-9 0-4 3-8 5-10z" fill="url(#cqb)" /><path d="M24 14h7c5 0 8 4 8 9 0 4-3 9-6 12-2 2-4 3-7 3h-9c3-1 3-3 4-6z" fill="#c86fe8" /><path d="M16 30h12c-2 5-5 8-10 8h-6c2-1 3-4 4-8z" fill="#f0563a" /></svg>,
  <svg width="34" height="34" viewBox="0 0 34 34"><circle cx="19" cy="5" r="4" fill="#7b83eb" /><circle cx="28" cy="9" r="3.5" fill="#5059c9" /><rect x="20" y="14" width="13" height="14" rx="5" fill="#5059c9" /><rect x="9" y="10" width="18" height="23" rx="6" fill="#7b83eb" /><rect x="1" y="8" width="18" height="18" rx="2" fill="#4b53bc" /><text x="10" y="22" textAnchor="middle" fontSize="13" fontWeight="700" fontFamily="Open Sans, sans-serif" fill="#fff">T</text></svg>,
  <svg width="34" height="34" viewBox="0 0 34 34"><path d="M10 14 27 2l6 10v14c0 3-2 5-5 5H13z" fill="#28a8ea" /><path d="M11 20 33 10v8L15 32z" fill="#50d9ff" /><rect x="1" y="10" width="17" height="17" rx="2" fill="#0a5ea8" /><circle cx="9.5" cy="18.5" r="4.5" fill="none" stroke="#fff" strokeWidth="2" /></svg>,
  <svg width="34" height="34" viewBox="0 0 34 34"><circle cx="17" cy="17" r="16" fill="#e33b2e" /><path d="M17 17 3 9a16 16 0 0 0 8 23z" fill="#2a9c44" /><path d="M17 9h14a16 16 0 0 1-14 24l7-12z" fill="#f7c325" /><circle cx="17" cy="17" r="8" fill="#fff" /><circle cx="17" cy="17" r="6" fill="#2f74e0" /></svg>,
  <svg width="38" height="38" viewBox="0 0 38 38"><g transform="translate(0 4)"><circle cx="17" cy="17" r="16" fill="#e33b2e" /><path d="M17 17 3 9a16 16 0 0 0 8 23z" fill="#2a9c44" /><path d="M17 9h14a16 16 0 0 1-14 24l7-12z" fill="#f7c325" /><circle cx="17" cy="17" r="8" fill="#fff" /><circle cx="17" cy="17" r="6" fill="#2f74e0" /></g><circle cx="27" cy="11" r="10" fill="#6a9b3c" /><text x="27" y="15" textAnchor="middle" fontSize="11" fontFamily="Open Sans, sans-serif" fill="#dfeccd">A</text></svg>,
  <svg width="30" height="30" viewBox="0 0 30 30"><rect x="0" y="0" width="30" height="30" rx="3" fill="#333" /><rect x="0" y="0" width="30" height="7" rx="3" fill="#8d8d8d" /><path d="M6 12l5 4-5 4" stroke="#fff" strokeWidth="1.5" fill="none" /><path d="M13 22h8" stroke="#fff" strokeWidth="1.8" /></svg>,
  <svg width="24" height="38" viewBox="0 0 24 38"><rect x="1" y="3" width="22" height="31" rx="1" fill="#41b8d8" /><path d="M4 2v4M9 2v4M14 2v4M19 2v4" stroke="#0f6d92" strokeWidth="1.5" /><path d="M6 13h12M6 19h12M6 25h12" stroke="#0b5f84" strokeWidth="1.8" /><rect x="1" y="34" width="22" height="3" fill="#a05a2c" /></svg>,
  <svg width="30" height="32" viewBox="0 0 30 32"><path d="M11 3h18v26H11z" fill="#fff" stroke="#21a366" /><path d="M19 3v26M11 11h18M11 17h18M11 23h18" stroke="#21a366" /><path d="M0 3 18 0v32L0 29z" fill="#107c41" /><text x="9" y="21" textAnchor="middle" fontSize="14" fontWeight="700" fontFamily="Open Sans, sans-serif" fill="#fff">X</text></svg>,
  <svg width="30" height="38" viewBox="0 0 30 38"><rect x="0" y="0" width="30" height="38" fill="#0a78d4" /><rect x="16" y="0" width="14" height="38" fill="#d99a12" /><rect x="9" y="10" width="13" height="28" fill="#f2c536" /><rect x="2" y="21" width="13" height="17" fill="#f8e07a" /></svg>,
];

const Win = () => <svg width="30" height="30" viewBox="0 0 30 30"><defs><linearGradient id="st" x1="0" y1="0" x2="1" y2="1"><stop offset="0" stopColor="#5fd4f5" /><stop offset="1" stopColor="#0a78d4" /></linearGradient></defs><g fill="url(#st)"><rect x="0" y="0" width="14.3" height="14.3" rx="1" /><rect x="15.7" y="0" width="14.3" height="14.3" rx="1" /><rect x="0" y="15.7" width="14.3" height="14.3" rx="1" /><rect x="15.7" y="15.7" width="14.3" height="14.3" rx="1" /></g></svg>;

const points = [[0, 183], [60, 231], [122, 217], [184, 226], [244, 88], [305, 83], [366, 100], [424, 88]];

const ribbon = {
  data: [
    { w: 56, i: 'getdata', a: 'Get', b: 'data', c: 1 },
    { w: 66, i: 'excel', a: 'Excel', b: 'workbook' },
    { w: 70, i: 'onelake', a: 'OneLake', b: 'catalog', c: 1 },
    { w: 48, i: 'sql', a: 'SQL', b: 'Server' },
    { w: 50, i: 'enter', a: 'Enter', b: 'data' },
    { w: 72, i: 'dataverse', a: 'Dataverse' },
    { w: 68, i: 'recent', a: 'Recent', b: 'sources', c: 1 },
  ],
  queries: [
    { w: 70, i: 'transform', a: 'Transform', b: 'data', c: 1 },
    { w: 54, i: 'refresh', a: 'Refresh', c: 1 },
  ],
  insert: [
    { w: 46, i: 'newvis', a: 'New', b: 'visual' },
    { w: 54, i: 'textbox', a: 'Text', b: 'box' },
    { w: 56, i: 'more', a: 'More', b: 'visuals', c: 1 },
  ],
  calc: [
    { w: 96, i: 'calc', a: 'New visual', b: 'calculation', c: 1 },
    { w: 58, i: 'measure', a: 'New', b: 'measure' },
    { w: 64, i: 'quick', a: 'Quick', b: 'measure' },
  ],
  sensitivity: [{ w: 90, i: 'sensitivity', a: 'Sensitivity', c: 1, off: 1 }],
  share: [{ w: 72, i: 'publish', a: 'Publish' }],
  copilot: [
    { w: 88, i: 'prep', a: 'Prep data for', b: 'AI' },
    { w: 54, i: 'copilot', a: 'Copilot' },
  ],
};

const tree = [
  { t: 'kpis_summary', table: 1 },
  { t: 'Annualized Vol...', ic: 's' },
  { t: 'CAGR', ic: 's' },
  { t: 'end_date', ic: 'c', col: 1 },
  { t: 'Max Drawdown', ic: 's' },
  { t: 'Sharpe (ann.)', ic: 's' },
  { t: 'start_date', ic: 'c', col: 1 },
  { t: 'timeseries_summary', table: 1 },
  { t: 'Adj Close', ic: 's' },
  { t: 'cumulative_retu...', ic: 's' },
  { t: 'Date', ic: 'c', exp: 1 },
  { t: 'Date Hierarc...', ic: 'h', exp: 1, lvl: 1 },
  { t: 'Year', lvl: 2 },
  { t: 'Quarter', lvl: 2 },
  { t: 'Month', lvl: 2 },
  { t: 'Day', lvl: 2 },
  { t: 'return', ic: 's' },
  { t: 'rolling_vol_30d', ic: 's' },
  { t: 'SMA_200' },
  { t: 'SMA_50', ic: 's' },
];

const RibbonItem = ({ w, i, a, b, c, off }) => (
  <RibItem $w={w} $off={off}>
    <RibIcon>{ribIcons[i]}</RibIcon>
    <RibLine>{a}</RibLine>
    <RibLine>{b}{c && <Caret />}</RibLine>
  </RibItem>
);

const TreeItem = ({ item }) => {
  if (item.table) {
    return (
      <TreeRow $pad={15}>
        <Slot $w={14} $m={7}><Down /></Slot>
        <Slot $w={15} $m={7}><TableIc /></Slot>
        {item.t}
      </TreeRow>
    );
  }
  return (
    <TreeRow $pad={35 + 19 * (item.lvl || 0)}>
      <Slot $w={15} $m={4}>{item.col && <Right />}{item.exp && <Down />}</Slot>
      <Check />
      <Slot $w={15} $m={8}>
        {item.ic === 's' && <Sigma />}
        {item.ic === 'c' && <Cal />}
        {item.ic === 'h' && <Hier />}
      </Slot>
      {item.t}
    </TreeRow>
  );
};

export default function App() {
  return (
    <Page>
      <GlobalStyle />
      <TitleBar>
        <TitleBtn><SaveIc /></TitleBtn>
        <TitleBtn><UndoIc /></TitleBtn>
        <TitleBtn><RedoIc /></TitleBtn>
        <TitleText>Untitled - Power BI Desktop</TitleText>
        <SignIn>Sign in</SignIn>
        <AvatarWrap><Avatar /></AvatarWrap>
        <WinBtn><svg width="12" height="2"><path d="M0 1h12" stroke="#fff" /></svg></WinBtn>
        <WinBtn><svg width="14" height="14" fill="none" stroke="#fff"><rect x="1.5" y="3.5" width="9" height="9" rx="1.5" /><path d="M4 1.5h7a2 2 0 0 1 2 2v7" /></svg></WinBtn>
        <WinBtn><svg width="14" height="14" stroke="#fff"><path d="M1 1l12 12M13 1 1 13" /></svg></WinBtn>
      </TitleBar>

      <TabRow>
        <Tab $w={82}><TabLabel>File</TabLabel></Tab>
        <Tab $w={86} $active><TabLabel $active>Home</TabLabel></Tab>
        <Tab $w={82}><TabLabel>Insert</TabLabel></Tab>
        <Tab $w={114}><TabLabel>Modeling</TabLabel></Tab>
        <Tab $w={78}><TabLabel>View</TabLabel></Tab>
        <Tab $w={106}><TabLabel>Optimize</TabLabel></Tab>
        <Tab $w={77}><TabLabel>Help</TabLabel></Tab>
        <Tab $w={93} $gap={6} $context><TabLabel>Format</TabLabel></Tab>
        <Tab $w={125} $context><TabLabel>Data / Drill</TabLabel></Tab>
        <ShareButton>
          <ShareIc />
          Share
          <svg width="10" height="7" fill="none" stroke="#fff"><path d="M.5 1 5 6l4.5-5" /></svg>
        </ShareButton>
      </TabRow>

      <Ribbon>
        <Group $w={201}>
          <GroupBody>
            <RibbonItem w={68} i="paste" a="Paste" off={1} />
            <SmallCol>
              <SmallRow><SmallIcon><CutIc /></SmallIcon>Cut</SmallRow>
              <SmallRow><SmallIcon><CopyIc /></SmallIcon>Copy</SmallRow>
              <SmallRow><SmallIcon><PainterIc /></SmallIcon>Format painter</SmallRow>
            </SmallCol>
          </GroupBody>
          <GroupLabel>Clipboard</GroupLabel>
        </Group>
        <Group $w={449}>
          <GroupBody $pad={7}>{ribbon.data.map((it) => <RibbonItem key={it.a} {...it} />)}</GroupBody>
          <GroupLabel>Data</GroupLabel>
        </Group>
        <Group $w={145}>
          <GroupBody $pad={10}>{ribbon.queries.map((it) => <RibbonItem key={it.a} {...it} />)}</GroupBody>
          <GroupLabel>Queries</GroupLabel>
        </Group>
        <Group $w={183}>
          <GroupBody $pad={12}>{ribbon.insert.map((it) => <RibbonItem key={it.a} {...it} />)}</GroupBody>
          <GroupLabel>Insert</GroupLabel>
        </Group>
        <Group $w={232}>
          <GroupBody $pad={6}>{ribbon.calc.map((it) => <RibbonItem key={it.i} {...it} />)}</GroupBody>
          <GroupLabel>Calculations</GroupLabel>
        </Group>
        <Group $w={92}>
          <GroupBody>{ribbon.sensitivity.map((it) => <RibbonItem key={it.a} {...it} />)}</GroupBody>
          <GroupLabel>Sensitivity</GroupLabel>
        </Group>
        <Group $w={74}>
          <GroupBody>{ribbon.share.map((it) => <RibbonItem key={it.a} {...it} />)}</GroupBody>
          <GroupLabel>Share</GroupLabel>
        </Group>
        <Group $w={165}>
          <GroupBody $pad={11}>{ribbon.copilot.map((it) => <RibbonItem key={it.a} {...it} />)}</GroupBody>
          <GroupLabel>Copilot</GroupLabel>
        </Group>
        <Collapse><svg width="10" height="7" fill="none" stroke="#222" strokeWidth="1.3"><path d="M1 6l4-4.5L9 6" /></svg></Collapse>
      </Ribbon>

      <Body>
        <Rail>
          <RailItem $active>
            <svg width="18" height="18" viewBox="0 0 18 18" fill="none" stroke="#252423" strokeWidth="1.2"><path d="M1 17h16" strokeWidth="1.4" /><rect x="1.5" y="3" width="3.5" height="12" /><rect x="7" y="7" width="3.5" height="8" /><rect x="12.5" y="2" width="3.5" height="13" /></svg>
          </RailItem>
          <RailItem>
            <svg width="20" height="20" viewBox="0 0 20 20" fill="none" stroke="#8a8886" strokeWidth="1.3"><rect x="1" y="1" width="18" height="18" /><path d="M1 4.5h18M1 9.5h18M1 14.5h18M7 4.5V19M13 4.5V19" /></svg>
          </RailItem>
          <RailItem>
            <svg width="22" height="22" viewBox="0 0 22 22" fill="none" stroke="#8a8886" strokeWidth="1.3"><rect x="1" y="7" width="8" height="8" /><path d="M1 11h8" /><rect x="12" y="1" width="9" height="8" /><path d="M12 5h9" /><rect x="12" y="13" width="9" height="8" /><path d="M12 17h9M9 9h3M9 14h3" /></svg>
          </RailItem>
          <RailItem>
            <svg width="24" height="22" viewBox="0 0 24 22" fill="none" stroke="#8a8886" strokeWidth="1.1"><path d="M6 10V1h7l5 5v10" /><path d="M13 1v5h5M20 8c2 4 2 8-2 11" /><text x="0" y="18" fontSize="7.5" fontWeight="700" fontFamily="Open Sans, sans-serif" fill="#8a8886" stroke="none">DAX</text></svg>
          </RailItem>
          <RailItem>
            <svg width="24" height="22" viewBox="0 0 24 22" fill="none" stroke="#8a8886" strokeWidth="1.1"><path d="M5 10V1h9l5 5v4M14 1v5h5" /><text x="0" y="19" fontSize="7.5" fontWeight="700" fontFamily="Open Sans, sans-serif" fill="#8a8886" stroke="none">TMDL</text></svg>
          </RailItem>
        </Rail>

        <Center>
          <CenterTop>
            <Canvas>
              <CanvasTitle>CAGR</CanvasTitle>
              <Card $cx={179} $cy={119}><CardValue>0.07</CardValue><CardLabel>Sum of CAGR</CardLabel></Card>
              <Card $cx={531} $cy={109}><CardValue>0.43</CardValue><CardLabel>Sum of Sharpe (ann.)</CardLabel></Card>
              <Card $cx={179} $cy={399}><CardValue>0.21</CardValue><CardLabel>Sum of Annualized Volatility</CardLabel></Card>
              <Card $cx={531} $cy={399}><CardValue $track={3}>-0.37</CardValue><CardLabel>Sum of Max Drawdown</CardLabel></Card>
              <Visual>
                <Chart width="424" height="320" viewBox="0 0 424 320">
                  <rect width="424" height="320" fill="#f3f3f3" />
                  <path d="M0 80h424M0 158h424M0 237h424" stroke="#fff" strokeWidth="2" />
                  <polyline points={points.map((p) => p.join(',')).join(' ')} fill="none" stroke="#d2d2d2" strokeWidth="3.5" />
                </Chart>
                <VisualHint>
                  <svg width="14" height="14" fill="none" stroke="#444"><circle cx="7" cy="7" r="6" /><path d="M7 6v4M7 3.5v1" /></svg>
                  Select or drag fields to populate this visual
                </VisualHint>
                <VisualTools>
                  <Funnel s={20} c="#8a8886" />
                  <svg width="19" height="17" viewBox="0 0 19 17" fill="none" stroke="#8a8886" strokeWidth="1.2"><path d="M8 1H1v15h17V8M1 10h7v6M11 1h7v7M18 1l-7 7" /></svg>
                  <svg width="20" height="4" fill="#7a7876"><circle cx="2" cy="2" r="1.5" /><circle cx="10" cy="2" r="1.5" /><circle cx="18" cy="2" r="1.5" /></svg>
                </VisualTools>
                <Corner $top $lft $pos="left:-2px;top:-2px;" />
                <Corner $top $pos="right:-2px;top:-2px;" />
                <Corner $lft $pos="left:-2px;bottom:-2px;" />
                <Corner $pos="right:-2px;bottom:-2px;" />
                <Handle $pos="left:204px;top:-2px;" />
                <Handle $pos="left:204px;bottom:-2px;" />
                <Handle $v $pos="left:-3px;top:302px;" />
                <Handle $v $pos="right:-3px;top:302px;" />
              </Visual>
              <FoldLine />
            </Canvas>

            <FiltersPane>
              <PaneHead $left={15} $right={11} $gap={9}>
                <Funnel s={20} w={2} />
                Filters
                <PaneEnd>
                  <svg width="16" height="12" viewBox="0 0 16 12" fill="none" stroke="#252423" strokeWidth="1.3"><path d="M1 6c3-6 11-6 14 0" /><circle cx="8" cy="7" r="2.5" /></svg>
                  <Chev2 />
                </PaneEnd>
              </PaneHead>
              <SearchWrap>
                <FilterSearch>
                  <svg width="18" height="18" viewBox="0 0 18 18" fill="none" stroke="#444" strokeWidth="1.1"><circle cx="11" cy="7" r="6" /><path d="M7 11.5 1 17" /></svg>
                  Search
                </FilterSearch>
              </SearchWrap>
              {['Filters on this visual', 'Filters on this page', 'Filters on all pages'].map((t) => (
                <FilterSection key={t}>
                  <FilterHead>{t}<svg width="14" height="4" fill="#555"><circle cx="2" cy="2" r="1" /><circle cx="7" cy="2" r="1" /><circle cx="12" cy="2" r="1" /></svg></FilterHead>
                  <FilterWell>Add data fields here</FilterWell>
                </FilterSection>
              ))}
            </FiltersPane>
          </CenterTop>

          <PageBar>
            <DeviceBtn $w={50} $active>
              <svg width="24" height="22" viewBox="0 0 24 22" fill="none" stroke="#605e5c" strokeWidth="1.2"><rect x="1" y="1" width="22" height="15" /><path d="M12 16v4M7 20.5h10" /></svg>
            </DeviceBtn>
            <DeviceBtn $w={62}>
              <svg width="16" height="24" viewBox="0 0 16 24" fill="none" stroke="#605e5c" strokeWidth="1.2"><rect x="1" y="1" width="14" height="22" rx="1.5" /><path d="M7 20h2" /></svg>
            </DeviceBtn>
            <Arrows>
              <svg width="7" height="12" fill="#c8c6c4"><path d="M7 0v12L0 6z" /></svg>
              <svg width="7" height="12" fill="#c8c6c4"><path d="M0 0v12l7-6z" /></svg>
            </Arrows>
            <PageTab>Page 1</PageTab>
            <AddTab><svg width="14" height="14" stroke="#fff" strokeWidth="3"><path d="M7 0v14M0 7h14" /></svg></AddTab>
          </PageBar>
        </Center>

        <VizPane>
          <PaneHead $right={10}>
            Visualizations
            <PaneEnd><Chev2 /></PaneEnd>
          </PaneHead>
          <BuildLabel>Build visual</BuildLabel>
          <BuildTabs>
            <BuildTab $on $gap={44}>
              <svg width="30" height="30" viewBox="0 0 30 30" fill={GREEN}><path d="M2 1h26" stroke="#333" strokeWidth="1.3" /><rect x="2" y="6" width="26" height="9" stroke="#222" strokeDasharray="2 1" /><rect x="2" y="19" width="26" height="9" stroke="#222" strokeDasharray="2 1" /></svg>
            </BuildTab>
            <BuildTab $gap={41}>
              <svg width="28" height="28" viewBox="0 0 28 28" fill="none" stroke="#444" strokeWidth="1.3"><path d="M2 26V12h6V4h8v10M8 12v8" /><path d="M26 10c-4 0-9 5-11 8-3 0-4 3-4 6 3 0 6-1 7-4 3-2 7-6 8-10z" fill="#f3f2f1" /></svg>
            </BuildTab>
            <BuildTab $gap={0}>
              <svg width="30" height="30" viewBox="0 0 30 30" fill="none" stroke="#333" strokeWidth="1.3"><circle cx="13" cy="13" r="11.5" /><path d="M2 16l6-5 6 3 6-6 4 3" /><path d="M8 18v6M12 18v6M16 18v6" /><path d="M21 21l7 7" strokeWidth="2" /></svg>
            </BuildTab>
          </BuildTabs>
          <BuildRule />
          <VizGrid>
            {vizIcons.map((ic, n) => <VizCell key={n}>{ic}</VizCell>)}
          </VizGrid>
          {['X-axis', 'Y-axis', 'Secondary y-axis', 'Legend', 'Small multiples'].map((t) => (
            <WellSection key={t}>
              <WellLabel>{t}</WellLabel>
              <Well>Add data fields here</Well>
            </WellSection>
          ))}
          <Scroll />
        </VizPane>

        <DataPane>
          <PaneHead $left={8} $right={9}>
            Data
            <PaneEnd><Chev2 /></PaneEnd>
          </PaneHead>
          <DataSearch><Lens s={18} />Search</DataSearch>
          <Tree>{tree.map((it) => <TreeItem key={it.t} item={it} />)}</Tree>
        </DataPane>
      </Body>

      <StatusBar>
        Page 1 of 1
        <Zoomer>
          <svg width="150" height="14" viewBox="0 0 150 14" fill="none" stroke="#605e5c"><path d="M0 7h4" strokeWidth="2" /><path d="M10 7h125" /><path d="M53 1v12" strokeWidth="4" /><path d="M72 4v6" /><path d="M141 7h9M145.5 2.5v9" strokeWidth="1.5" /></svg>
          <ZoomPct>73%</ZoomPct>
          <svg width="20" height="16" viewBox="0 0 20 16" fill="none" stroke="#605e5c"><rect x=".5" y=".5" width="19" height="15" stroke="#8a8886" strokeWidth="1.5" /><path d="M4 6V3.5h3M13 3.5h3V6M16 10v2.5h-3M7 12.5H4V10" /></svg>
        </Zoomer>
      </StatusBar>

      <Taskbar>
        <Weather>
          <svg width="34" height="34" viewBox="0 0 34 34"><path d="M3 18a8 8 0 0 1 10-8v8z" fill="#f0a91e" /><path d="M5 31a6 6 0 0 1 0-12c1-5 9-6 12-2 5-1 9 2 9 7s-3 7-6 7z" fill="#a9c7ec" stroke="#7aa5d8" /></svg>
          <WeatherBadge>5</WeatherBadge>
          <WeatherText>18°C<br />Mostly cloudy</WeatherText>
        </Weather>
        <TaskSlot><Win /></TaskSlot>
        <SearchPill>
          <svg width="20" height="20" viewBox="0 0 20 20" fill="none" stroke="#222" strokeWidth="2"><circle cx="8.5" cy="8.5" r="6.5" /><path d="M13.5 13.5 19 19" /></svg>
          Search
        </SearchPill>
        {taskIcons.map((ic, n) => (
          <TaskSlot key={n} $run={n === 1 || (n >= 8 && n <= 11)} $active={n === 12}>{ic}</TaskSlot>
        ))}
        <Tray>
          <TraySlot $w={26} $m={15}><svg width="14" height="9" fill="none" stroke="#222" strokeWidth="1.5"><path d="M1 8l6-6.5L13 8" /></svg></TraySlot>
          <TraySlot $w={22} $m={7}>
            <svg width="22" height="22" viewBox="0 0 22 22"><path d="M4 15c-3-1-3-5 0-6 0-5 7-7 10-3v9z" fill="#666" /><circle cx="14" cy="15" r="6" fill="#1f78c1" /><path d="M14 11.5v1M14 14v4" stroke="#fff" strokeWidth="1.5" /></svg>
          </TraySlot>
          <TrayText $w={62}>ENG<br />IN</TrayText>
          <TraySlot $w={30}><svg width="20" height="18" viewBox="0 0 20 18" fill="none" stroke="#222" strokeWidth="1.3"><path d="M1 6c5-6 13-6 18 0M4 9c4-4 8-4 12 0M7 12c2-2 4-2 6 0" /><circle cx="10" cy="15.5" r="1.5" fill="#222" /></svg></TraySlot>
          <TraySlot $w={30}><svg width="21" height="20" viewBox="0 0 21 20" fill="none" stroke="#222" strokeWidth="1.2"><path d="M1 7h4l5-5v16l-5-5H1zM13 6c2 2 2 6 0 8M16 3c3.5 4 3.5 10 0 14" /></svg></TraySlot>
          <TraySlot $w={30}><svg width="22" height="20" viewBox="0 0 22 20" fill="#222" stroke="#222"><rect x="2" y="6" width="16" height="11" rx="1.5" /><rect x="18.5" y="9" width="2" height="5" /><path d="M7 0 4 6h4L6 11" fill="none" /></svg></TraySlot>
          <TrayText $push $align="right">22:23<br />19/09/2025</TrayText>
        </Tray>
      </Taskbar>
    </Page>
  );
}
